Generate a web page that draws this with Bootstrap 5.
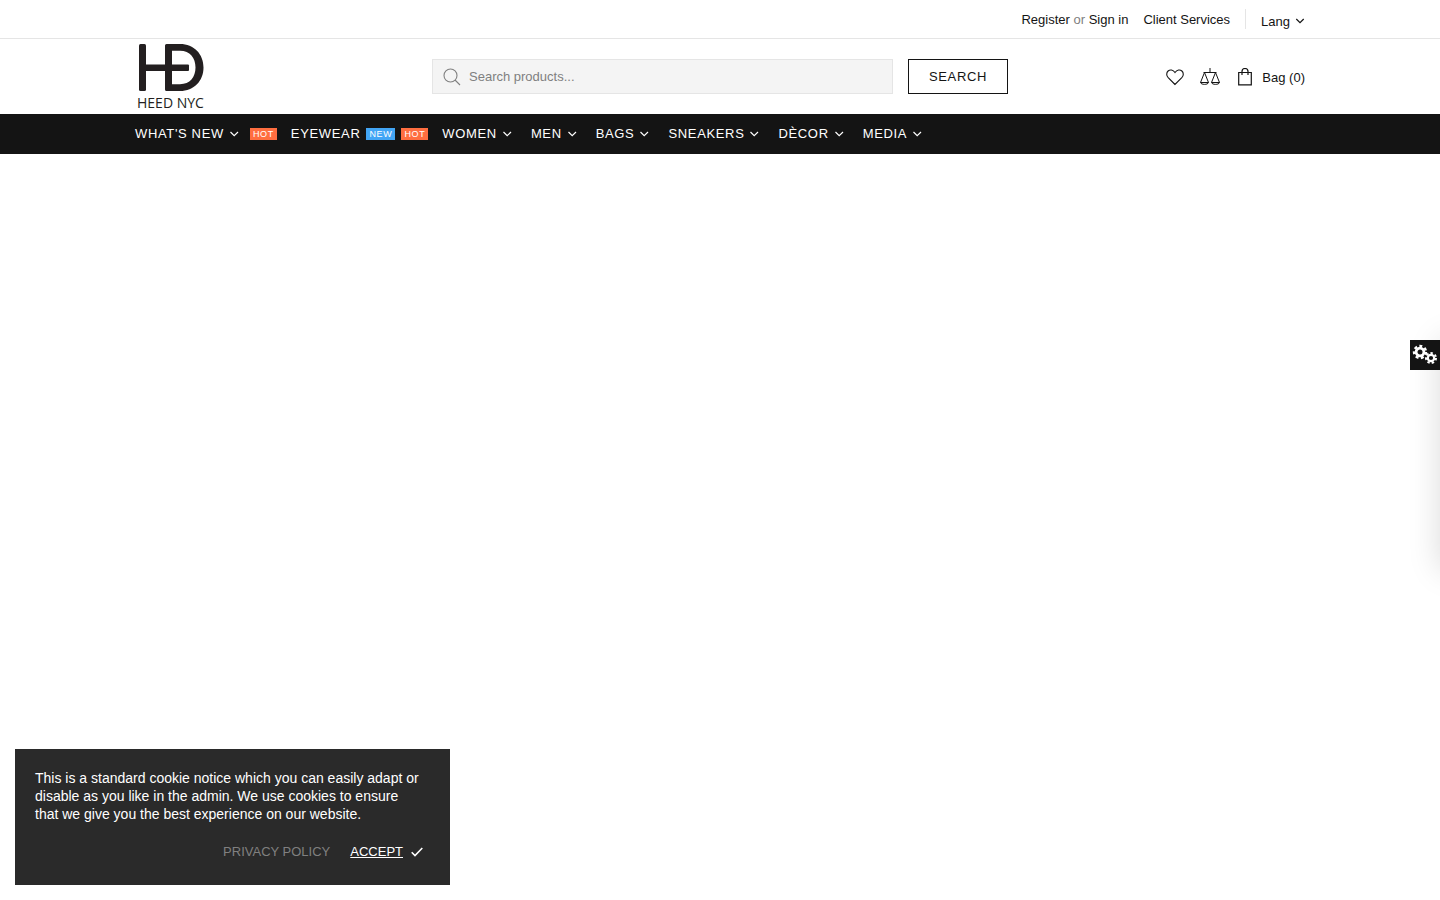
<!DOCTYPE html>
<html lang="en">
<head>
<meta charset="utf-8">
<meta name="viewport" content="width=device-width, initial-scale=1">
<title>HEED NYC</title>
<link href="https://cdn.jsdelivr.net/npm/bootstrap@5.3.0/dist/css/bootstrap.min.css" rel="stylesheet">
<style>
  body { font-family: "Liberation Sans", Arial, sans-serif; font-size: 13px; line-height: 18px; color: #141414; background: #fff; }
  a { color: inherit; text-decoration: none; }
  .shop-container { max-width: 1200px; padding-left: 15px; padding-right: 15px; }
  .topbar { border-bottom: 1px solid #e5e5e5; min-height: 39px; }
  .topbar-row { padding-top: 9px; }
  .topbar-links { column-gap: 15px; padding: 2px 15px 0 0; }
  .lang-wrap { border-left: 1px solid #e5e5e5; height: 20px; padding-left: 15px; }
  .plain-btn { background: none; border: 0; padding: 0; color: inherit; }
  .lang-btn { padding-top: 4px; column-gap: 5px; }
  .muted-text { color: #808080; }
  .header-grid { display: grid; grid-template-columns: 1fr minmax(0, 576px) 1fr; align-items: center; min-height: 75px; }
  .search-form { column-gap: 15px; }
  .search-field { height: 35px; background: #f4f4f4; border: 1px solid #e5e5e5; padding-left: 10px; color: #808080; }
  .search-field input { border: 0; background: none; box-shadow: none; padding: 0; font-size: 13px; color: #141414; }
  .search-field input:focus { background: none; box-shadow: none; }
  .search-field input::placeholder { color: #808080; }
  .search-btn { width: 100px; height: 35px; padding: 0; border: 1px solid #141414; border-radius: 0; background: #fff; color: #141414; font-size: 13px; letter-spacing: .05em; }
  .header-icons { column-gap: 16px; }
  .bag-label { padding: 3px 0 0 8px; }
  .mainnav { background: #141414; color: #fff; min-height: 40px; letter-spacing: .05em; }
  .mainnav ul { column-gap: 14px; }
  .tag { font-size: 9px; line-height: 12px; padding: 0 3px; margin-left: 6px; }
  .tag-hot { background: #ff6e40; }
  .tag-new { background: #42a5f5; }
  .cookie { left: 15px; bottom: 15px; width: 435px; max-width: calc(100% - 30px); padding: 20px; background: #2a2a2a; color: #fff; }
  .cookie p { font-size: 14px; margin-bottom: 20px; padding-right: 8px; }
  .cookie-actions { padding: 0 7px 4px 0; column-gap: 20px; }
  .settings { top: 340px; left: 100%; width: 300px; height: 230px; background: #fff; box-shadow: 0 0 30px rgba(0,0,0,.15); }
  .settings-btn { left: -30px; top: 0; width: 30px; height: 30px; background: #141414; color: #fff; }
</style>
</head>
<body>
<svg class="d-none" aria-hidden="true">
  <symbol id="chev" viewBox="0 0 20 12"><path d="M6.5 4l3.700 3.700L14 4" fill="none" stroke="currentColor" stroke-width="1.200"/></symbol>
</svg>

<div class="topbar">
  <div class="shop-container topbar-row container-fluid d-flex justify-content-end align-items-start">
    <div class="topbar-links d-flex"><span><a href="#">Register</a> <span class="muted-text">or</span> <a href="#">Sign in</a></span><a href="#">Client Services</a></div>
    <div class="lang-wrap"><button class="plain-btn lang-btn d-flex align-items-center" type="button">Lang<svg width="10" height="12" viewBox="0 0 10 12"><path d="M1.300 3l3.700 3.700L8.700 3" fill="none" stroke="currentColor" stroke-width="1.200"/></svg></button></div>
  </div>
</div>

<header class="shop-container container-fluid header-grid">
  <a href="#" aria-label="HEED NYC">
    <svg class="d-block" width="72" height="70" viewBox="0 2 72 70">
      <g fill="#231f20">
        <rect x="4" y="4" width="7" height="47" rx="1.500"/>
        <rect x="8" y="24.500" width="46" height="6.500" rx="1"/>
        <path fill-rule="evenodd" d="M31.500 4H45C59 4 68.500 14 68.500 27.500S59 51 45 51H31.500Q30 51 30 49.500V5.500Q30 4 31.500 4ZM37 10.800V44.200H45C55 44.200 60.500 37 60.500 27.500S55 10.800 45 10.800Z"/>
      </g>
      <text x="2" y="68" font-family="Open Sans, Noto Sans, sans-serif" font-size="14" fill="#231f20">HEED NYC</text>
    </svg>
  </a>
  <form class="search-form d-flex" onsubmit="return false">
    <div class="search-field d-flex align-items-center flex-grow-1">
      <svg class="flex-shrink-0" width="18" height="18" viewBox="0 0 18 18" fill="none" stroke="currentColor" stroke-width="1.100"><circle cx="7.500" cy="7.500" r="6.500"/><path d="M12 12l5 5"/></svg>
      <input class="form-control ms-2 pe-2" type="text" aria-label="Search products" placeholder="Search products...">
    </div>
    <button class="search-btn btn flex-shrink-0" type="submit">SEARCH</button>
  </form>
  <div class="header-icons d-flex justify-content-end align-items-center">
    <a href="#" aria-label="Wishlist"><svg class="d-block" width="18" height="18" viewBox="0 0 18 18" fill="none" stroke="currentColor" stroke-width="1.100"><path d="M9 16.500L2.200 9.700C.2 7.600.3 4.600 2.100 3 4 1.300 7 1.600 9 4.500 11 1.600 14 1.300 15.900 3c1.800 1.600 1.900 4.600-.1 6.700z"/></svg></a>
    <a href="#" aria-label="Compare"><svg class="d-block" width="20" height="18" viewBox="0 0 20 18" fill="none" stroke="currentColor"><path d="M10 0v4.500M3.500 4.500h13M4.500 4.500l-4 10h8zM15.500 4.500l-4 10h8zM.5 14.500c.6 2.500 7.400 2.500 8 0M11.500 14.500c.6 2.500 7.400 2.500 8 0"/></svg></a>
    <a class="d-flex align-items-center" href="#"><svg width="18" height="18" viewBox="-2 0 18 18" fill="none" stroke="currentColor" stroke-width="1.200"><path d="M.7 4.500h12.600v12.400H.7zM4 7V3.500a3 3 0 0 1 6 0V7"/></svg><span class="bag-label">Bag (0)</span></a>
  </div>
</header>

<nav class="mainnav d-flex align-items-center">
  <div class="shop-container container-fluid">
    <ul class="list-unstyled d-flex flex-wrap m-0">
      <li><a class="d-flex align-items-center" href="#">WHAT'S NEW<svg width="20" height="12"><use href="#chev"/></svg><span class="tag tag-hot">HOT</span></a></li>
      <li><a class="d-flex align-items-center" href="#">EYEWEAR<span class="tag tag-new">NEW</span><span class="tag tag-hot">HOT</span></a></li>
      <li><a class="d-flex align-items-center" href="#">WOMEN<svg width="20" height="12"><use href="#chev"/></svg></a></li>
      <li><a class="d-flex align-items-center" href="#">MEN<svg width="20" height="12"><use href="#chev"/></svg></a></li>
      <li><a class="d-flex align-items-center" href="#">BAGS<svg width="20" height="12"><use href="#chev"/></svg></a></li>
      <li><a class="d-flex align-items-center" href="#">SNEAKERS<svg width="20" height="12"><use href="#chev"/></svg></a></li>
      <li><a class="d-flex align-items-center" href="#">DÈCOR<svg width="20" height="12"><use href="#chev"/></svg></a></li>
      <li><a class="d-flex align-items-center" href="#">MEDIA<svg width="20" height="12"><use href="#chev"/></svg></a></li>
    </ul>
  </div>
</nav>

<aside class="settings position-fixed" aria-label="Theme settings">
  <button class="settings-btn plain-btn position-absolute d-flex align-items-center justify-content-center" type="button" aria-label="Open settings">
    <svg width="26" height="22" viewBox="0 0 26 22" fill="none" stroke="currentColor">
      <circle cx="8" cy="8" r="3.900" stroke-width="2.800"/><circle cx="8" cy="8" r="6" stroke-width="2.400" stroke-dasharray="2.900 2.486"/>
      <circle cx="19" cy="14" r="3.200" stroke-width="2.200"/><circle cx="19" cy="14" r="5" stroke-width="2" stroke-dasharray="2.400 2.088"/>
    </svg>
  </button>
</aside>

<section class="cookie position-fixed" aria-label="Cookie notice">
  <p>This is a standard cookie notice which you can easily adapt or disable as you like in the admin. We use cookies to ensure that we give you the best experience on our website.</p>
  <div class="cookie-actions d-flex justify-content-end align-items-center">
    <a class="muted-text" href="#">PRIVACY POLICY</a>
    <button class="plain-btn d-flex align-items-center" type="button"><span class="text-decoration-underline text-white">ACCEPT</span><svg class="ms-2" width="12" height="10" viewBox="0 0 12 10" fill="none" stroke="#fff" stroke-width="1.600"><path d="M.7 5.200L4 8.500 11.300 1"/></svg></button>
  </div>
</section>
<script src="https://cdn.jsdelivr.net/npm/bootstrap@5.3.0/dist/js/bootstrap.bundle.min.js"></script>
</body>
</html>
